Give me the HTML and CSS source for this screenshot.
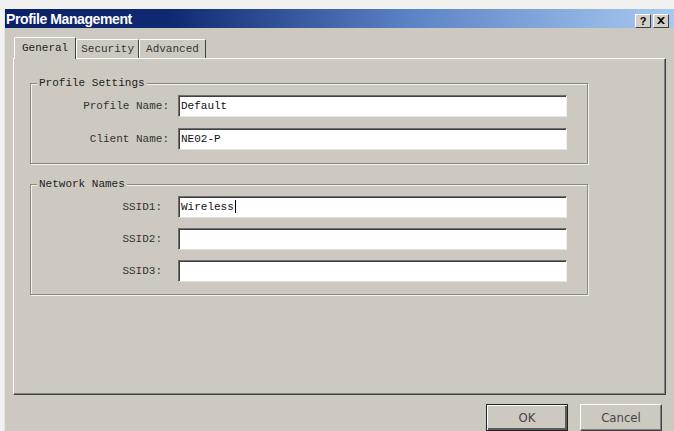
FILE: index.html
```html
<!DOCTYPE html>
<html lang="en">
<head>
  <meta charset="UTF-8">
  <title>Profile Management</title>
  <link rel="stylesheet" href="styles.css">
</head>
<body>
  <div class="window">
    <div class="titlebar">
      <span class="title">Profile Management</span>
      <div class="caption-btns">
        <span class="cap-btn help">?</span>
        <span class="cap-btn">
          <svg width="8" height="7" viewBox="0 0 8 7"><path d="M0 0h2l2 2 2-2h2L5 3.5 8 7H6L4 5 2 7H0l3-3.5z" fill="#000"/></svg>
        </span>
      </div>
    </div>

    <div class="client">
      <div class="tabs">
        <div class="tab active">General</div>
        <div class="tab">Security</div>
        <div class="tab">Advanced</div>
      </div>

      <div class="panel">
        <fieldset class="group">
          <legend>Profile Settings</legend>
          <div class="row">
            <label>Profile Name:</label>
            <div class="field">Default</div>
          </div>
          <div class="row">
            <label>Client Name:</label>
            <div class="field">NE02-P</div>
          </div>
        </fieldset>

        <fieldset class="group net">
          <legend>Network Names</legend>
          <div class="row">
            <label class="ssid">SSID1:</label>
            <div class="field">Wireless<span class="caret"></span></div>
          </div>
          <div class="row">
            <label class="ssid">SSID2:</label>
            <div class="field"></div>
          </div>
          <div class="row">
            <label class="ssid">SSID3:</label>
            <div class="field"></div>
          </div>
        </fieldset>
      </div>

      <div class="actions">
        <button type="button" class="btn default">OK</button>
        <button type="button" class="btn">Cancel</button>
      </div>
    </div>
  </div>
</body>
</html>
```

FILE: styles.css
```css
body {
  margin: 0;
  padding: 9px 0 0 4px;
  height: 431px;
  box-sizing: border-box;
  overflow: hidden;
  background: #f1f1ef;
  font-family: "Liberation Mono", "Courier New", monospace;
  font-size: 11px;
  color: #222;
}

.window {
  height: 422px;
  background: #cdc9c0;
  border-left: 1px solid #e6e4df;
}

/* title bar */
.titlebar {
  height: 19px;
  display: flex;
  align-items: center;
  justify-content: space-between;
  padding: 0 5px 0 1px;
  background: linear-gradient(90deg, #0a2068 0%, #102a72 25%, #5a82c4 60%, #a8caf0 100%);
}

.title {
  font-family: "Liberation Sans", sans-serif;
  font-weight: bold;
  font-size: 14px;
  letter-spacing: -0.4px;
  color: #fff;
}

.caption-btns {
  display: flex;
  gap: 2px;
  margin-top: 4px;
}

.cap-btn {
  width: 16px;
  height: 14px;
  box-sizing: border-box;
  display: flex;
  align-items: center;
  justify-content: center;
  background: #d4d0c8;
  border: 1px solid;
  border-color: #fff #404040 #404040 #fff;
  font-family: "Liberation Sans", sans-serif;
  font-weight: bold;
  font-size: 11px;
  color: #000;
}

/* dialog body */
.client {
  padding: 9px 8px 0 8px;
}

.tabs {
  display: flex;
  align-items: flex-end;
  height: 21px;
  padding-left: 1px;
  position: relative;
  z-index: 1;
}

.tab {
  height: 19px;
  box-sizing: border-box;
  padding: 0 4px;
  line-height: 18px;
  border: 1px solid;
  border-bottom: none;
  border-color: #fff #404040 transparent #fff;
  border-radius: 2px 2px 0 0;
  color: #333;
}

.tab:last-child {
  padding: 0 6px;
}

.tab.active {
  height: 22px;
  margin-bottom: -1px;
  padding: 0 7px;
  line-height: 20px;
  background: #cdc9c0;
  color: #222;
}

.panel {
  height: 337px;
  box-sizing: border-box;
  padding: 18px 0 0 16px;
  border: 1px solid;
  border-color: #fff #404040 #404040 #fff;
  box-shadow: inset -1px -1px 0 #808080;
}

.group {
  width: 558px;
  box-sizing: border-box;
  margin: 0;
  padding: 5px 0 13px 0;
  border: 1px solid #8a877f;
  box-shadow: 1px 1px 0 #f4f3f0, inset 1px 1px 0 #f4f3f0;
  display: grid;
  gap: 11px;
}

.group.net {
  margin-top: 14px;
  padding-bottom: 12px;
  gap: 10px;
}

.group legend {
  margin-left: 6px;
  padding: 0 2px;
  line-height: 13px;
  background: #cdc9c0;
  color: #222;
}

.row {
  display: grid;
  grid-template-columns: 138px 389px;
  column-gap: 9px;
  align-items: center;
}

.row label {
  text-align: right;
  color: #333;
}

.row label.ssid {
  padding-right: 7px;
}

.field {
  height: 22px;
  box-sizing: border-box;
  padding-left: 2px;
  line-height: 20px;
  background: #fff;
  border: 1px solid;
  border-color: #6e6e6e #f2f2f2 #e4e2de #6e6e6e;
  box-shadow: inset 1px 1px 0 #404040;
  color: #111;
}

.caret {
  display: inline-block;
  width: 1px;
  height: 13px;
  margin-left: 1px;
  vertical-align: -3px;
  background: #000;
}

.actions {
  display: flex;
  justify-content: flex-end;
  gap: 12px;
  margin-top: 9px;
  padding-right: 4px;
}

.btn {
  width: 82px;
  height: 27px;
  box-sizing: border-box;
  background: #cdc9c0;
  border: 1px solid;
  border-color: #fff #404040 #404040 #fff;
  box-shadow: inset -1px -1px 0 #808080;
  font-family: "DejaVu Sans Condensed", "Liberation Sans", sans-serif;
  font-size: 13px;
  color: #444;
  padding: 0;
}

.btn.default {
  border: 1px solid #222;
  box-shadow: inset 1px 1px 0 #fff, inset -2px -2px 0 #5a5a5a;
}
```
